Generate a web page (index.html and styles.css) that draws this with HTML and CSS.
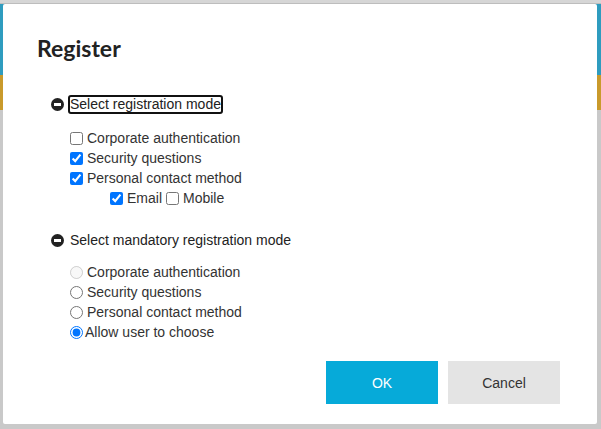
FILE: index.html
```html
<!DOCTYPE html>
<html>
<head>
<meta charset="utf-8">
<link rel="stylesheet" href="styles.css">
</head>
<body>
<div class="dialog">
  <h1 class="title">Register</h1>
  <div class="section">
    <div class="head head-first">
      <span class="minus"></span>
      <span class="head-label focused">Select registration mode</span>
    </div>
    <div class="list list-first">
      <label class="row"><input type="checkbox">Corporate authentication</label>
      <label class="row"><input type="checkbox" checked>Security questions</label>
      <label class="row"><input type="checkbox" checked>Personal contact method</label>
      <div class="row sub">
        <label class="pair"><input type="checkbox" checked>Email</label>
        <label class="pair"><input type="checkbox">Mobile</label>
      </div>
    </div>
  </div>
  <div class="section">
    <div class="head head-second">
      <span class="minus"></span>
      <span class="head-label">Select mandatory registration mode</span>
    </div>
    <div class="list list-second">
      <label class="row"><input type="radio" name="m" disabled>Corporate authentication</label>
      <label class="row"><input type="radio" name="m">Security questions</label>
      <label class="row"><input type="radio" name="m">Personal contact method</label>
      <label class="row tight"><input type="radio" name="m" checked>Allow user to choose</label>
    </div>
  </div>
  <div class="actions">
    <button class="btn btn-ok">OK</button>
    <button class="btn btn-cancel">Cancel</button>
  </div>
</div>
</body>
</html>
```
FILE: styles.css
```css
html, body {
  margin: 0;
  padding: 0;
}
body {
  width: 601px;
  height: 429px;
  overflow: hidden;
  background: linear-gradient(to bottom,
    #d6d6d6 0, #d6d6d6 3px,
    #bdbdbd 3px, #bdbdbd 4px,
    #2f9cbf 4px, #2f9cbf 75px,
    #c99a2b 75px, #c99a2b 110px,
    #c9c9c9 110px);
  font-family: "Liberation Sans", Arial, sans-serif;
  padding-top: 4px;
  box-sizing: border-box;
}
.dialog {
  margin: 0 4px 0 3px;
  height: 420px;
  background: #fff;
  border-radius: 2px;
  box-sizing: border-box;
  padding: 29px 37px 0 34px;
  display: flex;
  flex-direction: column;
  color: #333;
}
.title {
  margin: 0;
  font-family: "Lato", "Open Sans", sans-serif;
  font-weight: 700;
  font-size: 23px;
  line-height: 30px;
  color: #222;
}
.section {
  padding-left: 14px;
}
.head {
  display: flex;
  align-items: center;
  height: 20px;
  font-size: 14px;
}
.head-first {
  margin-top: 31px;
}
.head-second {
  margin-top: 22px;
}
.minus {
  width: 13px;
  height: 13px;
  border-radius: 50%;
  background: #222;
  position: relative;
  margin-right: 5px;
  flex: none;
}
.minus::after {
  content: "";
  position: absolute;
  left: 3px;
  right: 3px;
  top: 5px;
  height: 3px;
  background: #fff;
}
.head-label {
  color: #222;
  line-height: 17px;
  padding: 0 1px;
}
.focused {
  outline: 2px solid #111;
  outline-offset: -1px;
  border-radius: 2px;
}
.list {
  padding-left: 19px;
  display: flex;
  flex-direction: column;
}
.list-first {
  margin-top: 14px;
}
.list-second {
  margin-top: 12px;
}
.row {
  display: flex;
  align-items: center;
  height: 20px;
  font-size: 14px;
  color: #333;
  gap: 4px;
}
.row input, .pair input {
  margin: 0;
  width: 13px;
  height: 13px;
}
.tight {
  gap: 2px;
}
.sub {
  padding-left: 40px;
  gap: 4px;
}
.pair {
  display: flex;
  align-items: center;
  gap: 4px;
}
.actions {
  display: flex;
  justify-content: flex-end;
  gap: 10px;
  margin-top: 19px;
}
.btn {
  width: 112px;
  height: 43px;
  border: none;
  border-radius: 0;
  font-family: "Liberation Sans", Arial, sans-serif;
  font-size: 14px;
  padding: 0;
}
.btn-ok {
  background: #06aad9;
  color: #fff;
}
.btn-cancel {
  background: #e4e4e4;
  color: #333;
}
```
